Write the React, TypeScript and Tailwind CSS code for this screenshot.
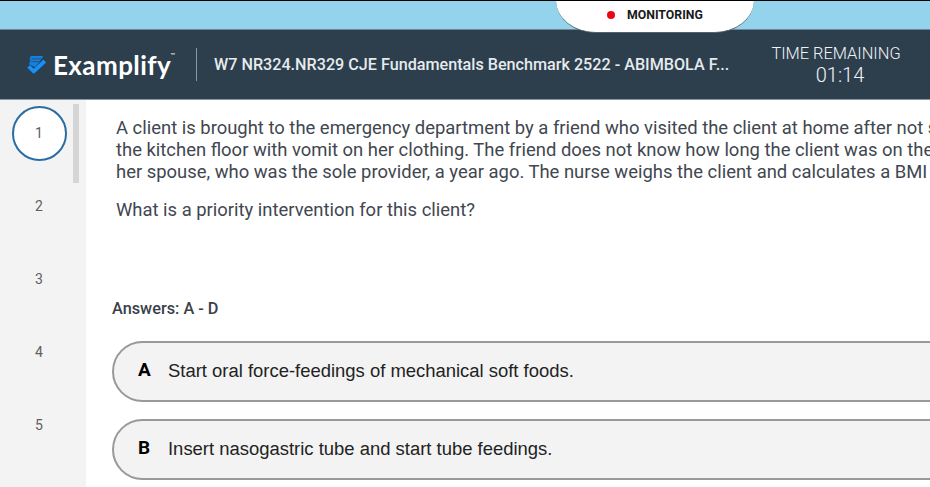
const questionLines = [
  'A client is brought to the emergency department by a friend who visited the client at home after not s',
  'the kitchen floor with vomit on her clothing. The friend does not know how long the client was on the',
  'her spouse, who was the sole provider, a year ago. The nurse weighs the client and calculates a BMI',
];

const answers = [
  { letter: 'A', text: 'Start oral force-feedings of mechanical soft foods.' },
  { letter: 'B', text: 'Insert nasogastric tube and start tube feedings.' },
];

function LogoMark() {
  return (
    <svg width="22" height="20" viewBox="0 0 22 20" className="shrink-0">
      <path d="M4.8 1h11.4c.8 0 .9.6.4 1.2L9.5 12.6 3.2 9.2l1-3.6-.6-1.8z" fill="#1580df" />
      <path d="M5.4 3.9h9.6M5 6.6h8" stroke="#21527f" strokeWidth="0.9" />
      <path d="M2.9 12l4.8 4.4L19 5.6" fill="none" stroke="#2c4050" strokeWidth="4.6" />
      <path d="M2.6 11.4l5.2 5L18.8 6" fill="none" stroke="#1690fa" strokeWidth="3.8" strokeLinejoin="round" />
    </svg>
  );
}

function Header() {
  return (
    <header className="flex h-[71px] shrink-0 items-center border-b border-t border-b-[#8d98a1] border-t-[#6d8796] bg-[#2d3e4d] pl-[26px] text-white">
      <LogoMark />
      <div className="ml-[5px] flex w-[143px] items-start whitespace-nowrap">
        <span className="font-[Lato,sans-serif] text-[26px] font-bold leading-[32px] tracking-[0.42px]">Examplify</span>
        <span className="-ml-px font-[Lato,sans-serif] text-[6px] leading-[12px]">™</span>
      </div>
      <div className="h-[33px] w-px shrink-0 bg-[#8997a2]" />
      <h1 className="ml-[17px] w-[540px] whitespace-nowrap text-[16.16px] font-medium leading-[20px] text-[#e6ebee]">
        W7 NR324.NR329 CJE Fundamentals Benchmark 2522 - ABIMBOLA F...
      </h1>
      <div className="ml-[7px] w-[150px] text-center font-light text-[#f0f3f6]">
        <div className="whitespace-nowrap text-[16.4px] leading-[20px]">TIME REMAINING</div>
        <div className="pl-[8px] text-[20px] leading-[22px]">01:14</div>
      </div>
    </header>
  );
}

export default function App() {
  return (
    <div className="relative flex h-[487px] w-[930px] flex-col overflow-hidden bg-white font-[Roboto,sans-serif]">
      <div className="h-[29px] shrink-0 border-t border-black bg-[#93d4ec]" />
      <Header />
      <div className="absolute left-[556px] top-[1px] flex h-[32px] w-[198px] items-center rounded-b-[40px_32px] border-b border-[#52636f] bg-white pb-[4px] pl-[51px]">
        <span className="size-[8px] rounded-full bg-[#e90713]" />
        <span className="ml-[12px] text-[12.3px] font-bold leading-[16px] text-[#17191c]">MONITORING</span>
      </div>
      <div className="flex min-h-0 flex-1">
        <nav className="flex w-[86px] shrink-0 justify-between bg-[#f3f3f3] pl-[11px] pr-[7px]">
          <div className="flex w-[56px] flex-col items-center pt-[6px] text-[14px] text-[#5c6064]">
            <div className="flex size-[55px] shrink-0 items-center justify-center rounded-full border-2 border-[#2a6da3] bg-white">1</div>
            <div className="mt-[9px] flex flex-col">
              {[2, 3, 4, 5].map((n) => (
                <div key={n} className="flex h-[73px] items-center justify-center">{n}</div>
              ))}
            </div>
          </div>
          <div className="mt-[4px] h-[79px] w-[6px] bg-[#d5d5d5]" />
        </nav>
        <main className="min-w-0 flex-1 overflow-hidden pl-[26px] pt-[17px]">
          <div className="pl-[4px] text-[18.43px] leading-[22px] text-[#3f4750]">
            {questionLines.map((line) => (
              <p key={line} className="whitespace-nowrap">{line}</p>
            ))}
            <p className="mt-[16px] whitespace-nowrap">What is a priority intervention for this client?</p>
          </div>
          <h2 className="mt-[78px] text-[16.3px] font-medium leading-[20px] text-[#3a4148]">Answers: A - D</h2>
          <div className="mt-[22px] flex flex-col gap-[17px]">
            {answers.map((a) => (
              <div key={a.letter} className="flex h-[61px] w-[860px] items-center rounded-full border-2 border-[#999] bg-[#f3f3f3] pb-[2px] pl-[24px] font-['Liberation_Sans',sans-serif] text-[18.45px] text-[#222]">
                <span className="w-[30px] font-[Roboto,sans-serif] text-[19px] font-bold text-black">{a.letter}</span>
                <span>{a.text}</span>
              </div>
            ))}
          </div>
        </main>
      </div>
    </div>
  );
}
